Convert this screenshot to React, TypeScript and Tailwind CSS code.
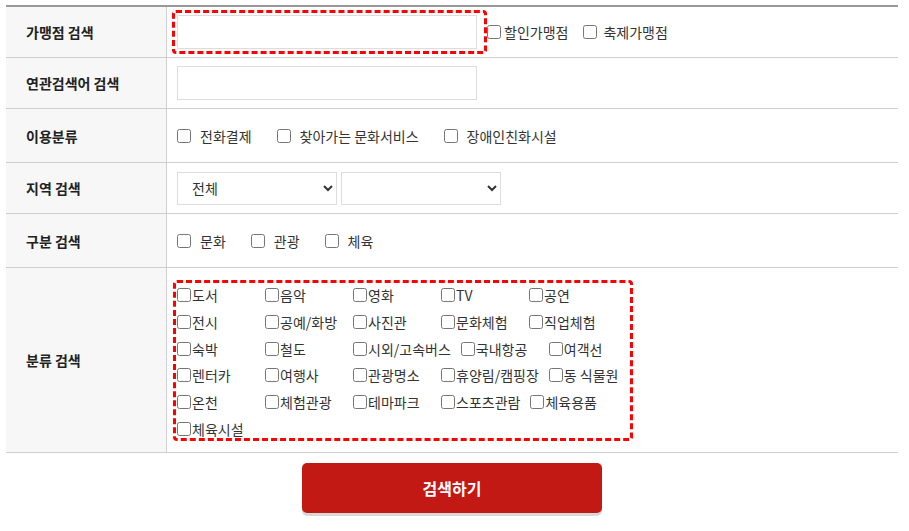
const categories = [
  '도서', '음악', '영화', 'TV', '공연',
  '전시', '공예/화방', '사진관', '문화체험', '직업체험',
  '숙박', '철도', '시외/고속버스', '국내항공', '여객선',
  '렌터카', '여행사', '관광명소', '휴양림/캠핑장', '동 식물원',
  '온천', '체험관광', '테마파크', '스포츠관람', '체육용품',
  '체육시설',
];

function Check({ label, gap = 'ml-[9px]', after = 'mr-[25px]' }: { label: string; gap?: string; after?: string }) {
  return (
    <label className={`flex items-center ${after}`}>
      <input type="checkbox" className="m-0 w-[14px] h-[14px]" />
      <span className={gap}>{label}</span>
    </label>
  );
}

function Row({ label, h, children, top = false }: { label: string; h: string; children: React.ReactNode; top?: boolean }) {
  return (
    <div className={`flex border-b border-[#cfcfcf] ${h}`}>
      <div className="w-[161px] shrink-0 bg-[#f7f7f7] border-r border-[#cfcfcf] flex items-center pl-[20px] font-bold text-[#222]">
        {label}
      </div>
      <div className={`relative flex-1 flex pl-[10px] ${top ? 'items-start' : 'items-center'}`}>{children}</div>
    </div>
  );
}

export default function App() {
  return (
    <div className="w-[909px] h-[531px] bg-white text-[14px] leading-[20px] text-[#333]" style={{ fontFamily: '"Noto Sans CJK KR", "Noto Sans", sans-serif' }}>
      <div className="ml-[6px] pt-[5px] w-[892px]">
        <div className="border-t-2 border-[#999]">
          <Row label="가맹점 검색" h="h-[51px]">
            <input type="text" className="w-[300px] h-[34px] border border-[#ddd] bg-white" />
            <div className="absolute left-[5px] top-[3px] w-[315px] h-[44px] border-[3px] border-dashed border-[#ff0000] rounded-[4px] pointer-events-none" />
            <Check label="할인가맹점" gap="ml-[3px]" after="ml-[10px] mr-[15px]" />
            <Check label="축제가맹점" gap="ml-[6px]" after="" />
          </Row>
          <Row label="연관검색어 검색" h="h-[51px]">
            <input type="text" className="w-[300px] h-[34px] border border-[#ddd] bg-white" />
          </Row>
          <Row label="이용분류" h="h-[54px]">
            <Check label="전화결제" />
            <Check label="찾아가는 문화서비스" />
            <Check label="장애인친화시설" />
          </Row>
          <Row label="지역 검색" h="h-[51px]">
            <select className="w-[160px] h-[33px] border border-[#ddd] bg-white pl-[10px] pr-[6px] text-[#333]">
              <option>전체</option>
            </select>
            <select className="ml-[4px] w-[160px] h-[33px] border border-[#ddd] bg-white px-[6px]">
              <option></option>
            </select>
          </Row>
          <Row label="구분 검색" h="h-[54px]">
            <Check label="문화" />
            <Check label="관광" />
            <Check label="체육" />
          </Row>
          <Row label="분류 검색" h="h-[185px]" top>
            <div className="absolute left-[6px] top-[12px] w-[460px] h-[161px] border-[3px] border-dashed border-[#ff0000] rounded-[4px] pointer-events-none" />
            <div className="mt-[14px] w-[470px] flex flex-wrap">
              {categories.map((c) => (
                <label key={c} className="min-w-[88px] pr-[10px] h-[26.67px] flex items-center">
                  <input type="checkbox" className="m-0 w-[14px] h-[14px]" />
                  <span className="ml-[1px] whitespace-nowrap">{c}</span>
                </label>
              ))}
            </div>
          </Row>
        </div>
        <div className="flex justify-center mt-[10px]">
          <button className="w-[300px] h-[50px] rounded-[5px] bg-[#c31915] text-white text-[16px] font-bold shadow-[0_3px_0_#d8d8d8]">
            검색하기
          </button>
        </div>
      </div>
    </div>
  );
}
